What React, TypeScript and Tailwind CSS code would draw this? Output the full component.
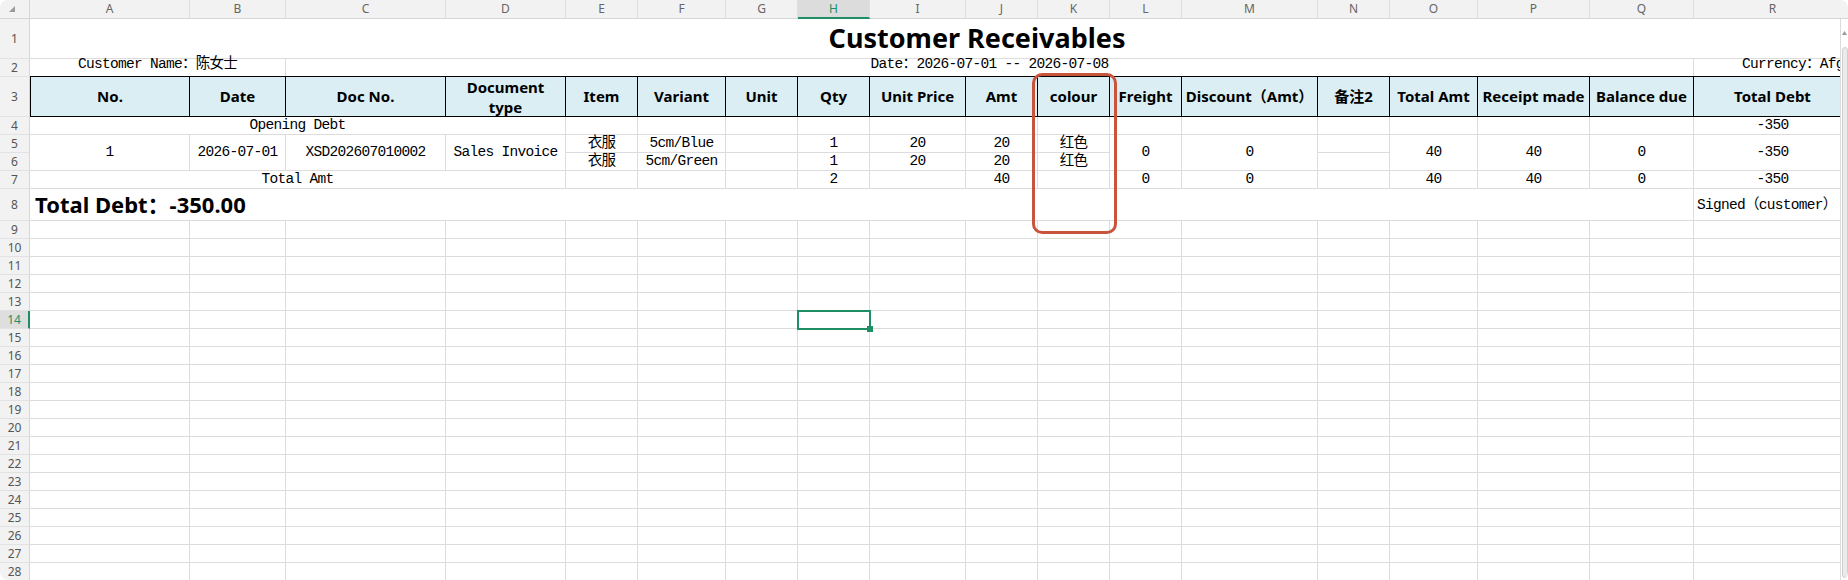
import type { ReactNode } from "react";
import clsx from "clsx";

const MONO =
  "font-['Liberation_Mono','Noto_Sans_CJK_SC',monospace] text-[14.5px] tracking-[-0.7px] text-black";
const BOLD = "font-['Noto_Sans','Noto_Sans_CJK_SC',sans-serif] font-bold text-black";
const UI = "font-['Noto_Sans',sans-serif] text-[12px]";

const columns = [
  { id: "A", w: "w-[160px]" },
  { id: "B", w: "w-[96px]" },
  { id: "C", w: "w-[160px]" },
  { id: "D", w: "w-[120px]" },
  { id: "E", w: "w-[72px]" },
  { id: "F", w: "w-[88px]" },
  { id: "G", w: "w-[72px]" },
  { id: "H", w: "w-[72px]" },
  { id: "I", w: "w-[96px]" },
  { id: "J", w: "w-[72px]" },
  { id: "K", w: "w-[72px]" },
  { id: "L", w: "w-[72px]" },
  { id: "M", w: "w-[136px]" },
  { id: "N", w: "w-[72px]" },
  { id: "O", w: "w-[88px]" },
  { id: "P", w: "w-[112px]" },
  { id: "Q", w: "w-[104px]" },
  { id: "R", w: "w-[158px]" },
  { id: "S", w: "w-[73px]" },
];

const headers: Record<string, ReactNode> = {
  A: "No.",
  B: "Date",
  C: "Doc No.",
  D: (
    <span className="text-center leading-[20px]">
      Document
      <br />
      type
    </span>
  ),
  E: "Item",
  F: "Variant",
  G: "Unit",
  H: "Qty",
  I: "Unit Price",
  J: "Amt",
  K: "colour",
  L: "Freight",
  M: "Discount（Amt）",
  N: "备注2",
  O: "Total Amt",
  P: "Receipt made",
  Q: "Balance due",
  R: "Total Debt",
};

const invoice: Record<string, string | [string, string]> = {
  A: "1",
  B: "2026-07-01",
  C: "XSD202607010002",
  D: "Sales Invoice",
  E: ["衣服", "衣服"],
  F: ["5cm/Blue", "5cm/Green"],
  G: ["", ""],
  H: ["1", "1"],
  I: ["20", "20"],
  J: ["20", "20"],
  K: ["红色", "红色"],
  L: "0",
  M: "0",
  N: ["", ""],
  O: "40",
  P: "40",
  Q: "0",
  R: "-350",
  S: ["", ""],
};

const totals: Record<string, string> = {
  H: "2",
  J: "40",
  L: "0",
  M: "0",
  O: "40",
  P: "40",
  Q: "0",
  R: "-350",
};

function Cell({
  w,
  children,
  className,
}: {
  w: string;
  children?: ReactNode;
  className?: string;
}) {
  return (
    <div
      className={clsx(
        "flex shrink-0 items-center justify-center whitespace-nowrap border-r border-b border-[#dcdcdc]",
        w,
        className
      )}
    >
      {children}
    </div>
  );
}

function RowHead({ n, className, active }: { n: number; className?: string; active?: boolean }) {
  return (
    <div
      className={clsx(
        UI,
        "flex w-[30px] shrink-0 items-center justify-center border-b border-[#e2e2e2]",
        active
          ? "border-r-2 border-r-[#1e8f65] bg-[#dedede] text-[#1e8f65]"
          : "border-r border-r-[#d6d6d6] bg-[#f2f2f2] text-[#555]",
        className
      )}
    >
      {n}
    </div>
  );
}

function ColumnHeader() {
  return (
    <div className="flex h-[19px] shrink-0">
      <div className="relative w-[30px] shrink-0 border-r border-b border-[#d6d6d6] bg-[#f2f2f2]">
        <svg className="absolute left-[9px] top-[6px]" width="6" height="6" viewBox="0 0 6 6">
          <polygon points="6,0 6,6 0,6" fill="#9a9a9a" />
        </svg>
      </div>
      {columns.map((c) => (
        <div
          key={c.id}
          className={clsx(
            UI,
            c.w,
            "flex shrink-0 items-center justify-center border-r border-[#dedede]",
            c.id === "H"
              ? "border-b-2 border-b-[#1e8f65] bg-[#dcdcdc] text-[#1e8f65]"
              : "border-b border-b-[#d6d6d6] bg-[#f2f2f2] text-[#666]"
          )}
        >
          {c.id === "S" ? null : c.id}
        </div>
      ))}
    </div>
  );
}

function EmptyRow({ n }: { n: number }) {
  return (
    <div className="flex h-[18px] shrink-0">
      <RowHead n={n} active={n === 14} />
      {columns.map((c) =>
        n === 14 && c.id === "H" ? (
          <Cell key={c.id} w={c.w} className="relative">
            <div className="absolute -left-px -top-px -right-[2px] -bottom-[2px] z-10 border-2 border-[#1e8f65]" />
            <div className="absolute -right-[4px] -bottom-[4px] z-20 h-[6px] w-[6px] bg-[#1e8f65]" />
          </Cell>
        ) : (
          <Cell key={c.id} w={c.w} />
        )
      )}
    </div>
  );
}

function Sheet() {
  return (
    <div className="relative flex h-[580px] w-[1840px] shrink-0 flex-col overflow-hidden bg-white">
      <ColumnHeader />

      {/* Row 1: title */}
      <div className="flex h-[40px] shrink-0">
        <RowHead n={1} />
        <Cell w="w-[1895px]">
          <span className={clsx(BOLD, "text-[27px]")}>Customer Receivables</span>
        </Cell>
      </div>

      {/* Row 2 */}
      <div className="flex h-[18px] shrink-0">
        <RowHead n={2} />
        <Cell w="w-[256px]" className={clsx(MONO, "items-end")}>
          Customer Name：陈女士
        </Cell>
        <Cell w="w-[1408px]" className={clsx(MONO, "items-end")}>
          Date：2026-07-01 -- 2026-07-08
        </Cell>
        <Cell w="w-[158px]" className={clsx(MONO, "items-end justify-start pl-[48px]")}>
          Currency：Afghani
        </Cell>
        <Cell w="w-[73px]" />
      </div>

      {/* Row 3: column titles */}
      <div className="-mt-px flex h-[41px] shrink-0">
        <RowHead n={3} className="border-t border-t-[#e2e2e2]" />
        {columns.map((c) =>
          c.id === "S" ? (
            <Cell key={c.id} w={c.w} className="border-t" />
          ) : (
            <Cell
              key={c.id}
              w={c.w}
              className={clsx(
                BOLD,
                "border-t border-black bg-[#daeef3] text-[15px]",
                c.id === "A" && "border-l"
              )}
            >
              {headers[c.id]}
            </Cell>
          )
        )}
      </div>

      {/* Row 4 */}
      <div className="flex h-[18px] shrink-0">
        <RowHead n={4} />
        <Cell w="w-[536px]" className={MONO}>
          Opening Debt
        </Cell>
        {columns.slice(4).map((c) => (
          <Cell key={c.id} w={c.w} className={MONO}>
            {c.id === "R" ? "-350" : null}
          </Cell>
        ))}
      </div>

      {/* Rows 5-6: invoice */}
      <div className="flex h-[36px] shrink-0">
        <div className="flex w-[30px] shrink-0 flex-col">
          <RowHead n={5} className="h-[18px]" />
          <RowHead n={6} className="h-[18px]" />
        </div>
        {columns.map((c) => {
          const v = invoice[c.id];
          if (Array.isArray(v)) {
            return (
              <div key={c.id} className={clsx("flex shrink-0 flex-col", c.w)}>
                <Cell w="w-full" className={clsx(MONO, "h-[18px]")}>
                  {v[0]}
                </Cell>
                <Cell w="w-full" className={clsx(MONO, "h-[18px]")}>
                  {v[1]}
                </Cell>
              </div>
            );
          }
          return (
            <Cell key={c.id} w={c.w} className={MONO}>
              {v}
            </Cell>
          );
        })}
      </div>

      {/* Row 7: totals */}
      <div className="flex h-[18px] shrink-0">
        <RowHead n={7} />
        <Cell w="w-[536px]" className={MONO}>
          Total Amt
        </Cell>
        {columns.slice(4).map((c) => (
          <Cell key={c.id} w={c.w} className={MONO}>
            {totals[c.id]}
          </Cell>
        ))}
      </div>

      {/* Row 8 */}
      <div className="flex h-[32px] shrink-0">
        <RowHead n={8} />
        <Cell w="w-[1664px]" className="justify-start pl-[5px]">
          <span className={clsx(BOLD, "text-[22px]")}>Total Debt：-350.00</span>
        </Cell>
        <Cell w="w-[158px]" className={clsx(MONO, "justify-start pl-[3px] pt-[3px]")}>
          Signed（customer）
        </Cell>
        <Cell w="w-[73px]" />
      </div>

      {Array.from({ length: 20 }, (_, i) => (
        <EmptyRow key={i} n={i + 9} />
      ))}

      {/* highlight around the colour column */}
      <div className="pointer-events-none absolute left-[1032px] top-[73px] z-30 h-[161px] w-[85px] rounded-[10px] border-[3px] border-[#c9543c]" />
    </div>
  );
}

function Scrollbar() {
  return (
    <div className="flex w-[8px] shrink-0 flex-col bg-white">
      <div className="h-[19px] shrink-0 border-b border-[#d6d6d6] bg-[#f2f2f2]" />
      <div className="flex h-[28px] shrink-0 items-center justify-center border-l border-[#dcdcdc]">
        <svg width="5" height="4" viewBox="0 0 5 4">
          <polygon points="2.5,0 5,4 0,4" fill="#9a9a9a" />
        </svg>
      </div>
      <div className="flex flex-1 border-l border-[#dcdcdc] pb-[2px] pl-px">
        <div className="flex-1 rounded-[3px] border border-[#cfcfcf] bg-[#ebebeb]" />
      </div>
    </div>
  );
}

export default function App() {
  return (
    <div className="h-[580px] w-[1848px] overflow-hidden bg-white">
      <div className="flex h-full w-full overflow-hidden rounded-[8px]">
        <Sheet />
        <Scrollbar />
      </div>
    </div>
  );
}
